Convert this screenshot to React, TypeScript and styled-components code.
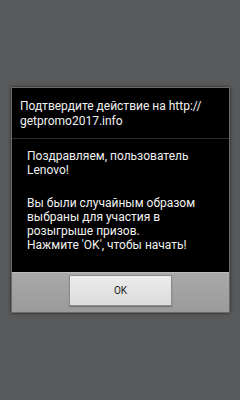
import React from 'react';
import styled, { createGlobalStyle } from 'styled-components';

const GlobalStyle = createGlobalStyle`
  html, body {
    margin: 0;
    padding: 0;
    background: #58595b;
  }
  body {
    font-family: Roboto, "Noto Sans", sans-serif;
  }
`;

const Screen = styled.div`
  width: 240px;
  height: 400px;
  box-sizing: border-box;
  padding: 87px 10px 0 11px;
  display: flex;
  flex-direction: column;
  align-items: stretch;
`;

const Dialog = styled.div`
  background: #000;
  border: 1px solid #6a6a6a;
  box-shadow: 0 0 3px rgba(0, 0, 0, 0.6);
  display: flex;
  flex-direction: column;
`;

const Title = styled.div`
  color: #f2f2f2;
  font-size: 12px;
  line-height: 15px;
  padding: 11px 8px 9px 8px;
  border-bottom: 1px solid #2e2e2e;
`;

const Body = styled.div`
  color: #f2f2f2;
  font-size: 12px;
  line-height: 14px;
  padding: 10px 8px 20px 15px;
`;

const Para = styled.p`
  margin: 0;
  & + & {
    margin-top: 18.7px;
  }
`;

const Footer = styled.div`
  background: linear-gradient(#a9a9a9, #9a9a9a);
  border-top: 1px solid #bdbdbd;
  display: flex;
  justify-content: center;
  padding: 2px 0 6px;
`;

const Button = styled.button`
  width: 103px;
  height: 31px;
  border: 1px solid #8c8c8c;
  background: linear-gradient(#ececec, #dcdcdc);
  color: #222;
  font-family: Roboto, "Noto Sans", sans-serif;
  font-size: 10px;
  padding: 0;
  box-shadow: 0 1px 1px rgba(0, 0, 0, 0.25);
`;

export default function App() {
  return (
    <>
      <GlobalStyle />
      <Screen>
        <Dialog>
          <Title>
            Подтвердите действие на http://
            <br />
            getpromo2017.info
          </Title>
          <Body>
            <Para>
              Поздравляем, пользователь
              <br />
              Lenovo!
            </Para>
            <Para>
              Вы были случайным образом
              <br />
              выбраны для участия в
              <br />
              розыгрыше призов.
              <br />
              Нажмите 'OK', чтобы начать!
            </Para>
          </Body>
          <Footer>
            <Button>OK</Button>
          </Footer>
        </Dialog>
      </Screen>
    </>
  );
}
